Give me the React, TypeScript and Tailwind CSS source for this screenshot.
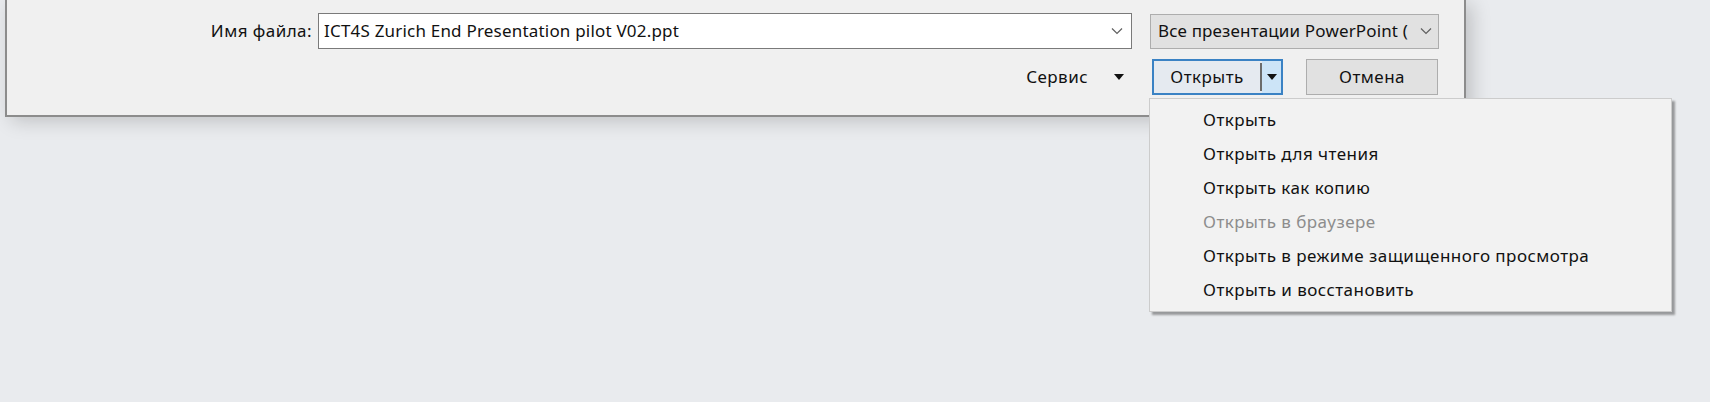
import React from 'react';

const menuItems = [
  { label: 'Открыть' },
  { label: 'Открыть для чтения' },
  { label: 'Открыть как копию' },
  { label: 'Открыть в браузере', disabled: true },
  { label: 'Открыть в режиме защищенного просмотра' },
  { label: 'Открыть и восстановить' },
];

const Chevron = () => (
  <svg width="12" height="8" viewBox="0 0 12 8" className="text-[#606060]">
    <path d="M1 1.5 L6 6.5 L11 1.5" fill="none" stroke="currentColor" strokeWidth="1.2" />
  </svg>
);

const DownTriangle = () => (
  <svg width="10" height="6" viewBox="0 0 10 6">
    <path d="M0 0 H10 L5 6 Z" fill="#111" />
  </svg>
);

const App = () => {
  return (
    <div
      className="relative w-[1710px] h-[402px] overflow-hidden bg-[#e9ebee] text-[17px] tracking-[0.45px] text-[#111]"
      style={{ fontFamily: '"Noto Sans", "Open Sans", sans-serif' }}
    >
      {/* dialog window (top part cut off) */}
      <div className="ml-[5px] w-[1461px] h-[117px] bg-[#f0f0f0] border-x-2 border-b-2 border-[#8c8c8c] shadow-[6px_4px_18px_rgba(0,0,0,0.18)]">
        {/* file name row */}
        <div className="flex items-center justify-end pr-[25px] pt-[13px]">
          <span className="mr-[6px] whitespace-nowrap">Имя файла:</span>
          <div className="flex items-center w-[814px] h-[36px] bg-white border border-[#7a7a7a] pl-[5px] pr-[8px]">
            <span className="flex-1 whitespace-nowrap tracking-[0.2px]">ICT4S Zurich End Presentation pilot V02.ppt</span>
            <Chevron />
          </div>
          <div className="ml-[18px] flex items-center w-[289px] h-[35px] bg-[#e1e1e1] border border-[#adadad] pl-[7px] pr-[6px]">
            <span className="flex-1 whitespace-nowrap overflow-hidden tracking-[0.15px]">Все презентации PowerPoint (</span>
            <Chevron />
          </div>
        </div>

        {/* buttons row */}
        <div className="flex items-center justify-end pr-[26px] pt-[10px]">
          <span className="mr-[26px]">Сервис</span>
          <DownTriangle />
          <div className="ml-[28px] flex w-[131px] h-[36px] border-2 border-[#3a82c4] bg-[#e5eaf0]">
            <div className="flex-1 flex items-center justify-center">Открыть</div>
            <div className="w-[2px] my-[2px] bg-[#6b6b6b]" />
            <div className="w-[19px] flex items-center justify-center bg-[#cce4f7]">
              <DownTriangle />
            </div>
          </div>
          <div className="ml-[23px] flex items-center justify-center w-[132px] h-[36px] bg-[#e1e1e1] border border-[#adadad]">
            Отмена
          </div>
        </div>
      </div>

      {/* dropdown menu */}
      <div className="absolute left-[1149px] top-[98px] w-[523px] py-[4px] bg-[#f2f2f2] border border-[#cccccc] shadow-[3px_3px_2px_rgba(0,0,0,0.35)]">
        {menuItems.map((item) => (
          <div
            key={item.label}
            className={`h-[34px] flex items-center pl-[53px] whitespace-nowrap ${item.disabled ? 'text-[#8d8d8d]' : 'text-[#111]'}`}
          >
            {item.label}
          </div>
        ))}
      </div>
    </div>
  );
};

export default App;
